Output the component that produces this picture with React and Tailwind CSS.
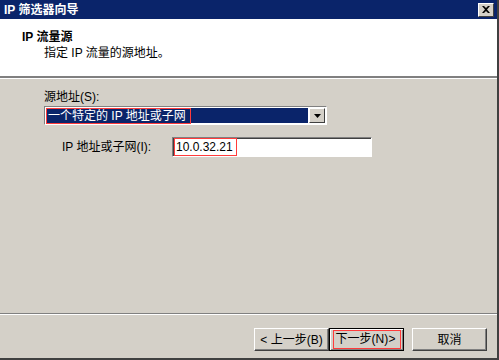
import React from 'react'

const font = { fontFamily: '"Liberation Sans", "Noto Sans CJK SC", sans-serif' }

const Button = ({ children, focused }) => (
  <button
    className={`h-[23px] w-[75px] bg-[#d4d0c8] text-[12px] text-black flex items-center justify-center whitespace-nowrap border ${
      focused
        ? 'border-black shadow-[inset_1px_1px_0_#fff,inset_-1px_-1px_0_#808080]'
        : 'border-t-white border-l-white border-r-[#404040] border-b-[#404040] shadow-[inset_-1px_-1px_0_#808080]'
    }`}
  >
    {focused ? (
      <span className="border border-[#ff3b3b] pl-[2px] pr-[4px] leading-[17px] w-[68px] flex justify-between">
        <span>下一步(N)</span>
        <span>&gt;</span>
      </span>
    ) : (
      <span>{children}</span>
    )}
  </button>
)

export default function App() {
  return (
    <div style={font} className="w-[499px] h-[360px] bg-[#d4d0c8] flex flex-col border-r-2 border-b-2 border-[#404040] overflow-hidden">
      {/* Title bar */}
      <div className="h-[19px] bg-[#0a246a] flex items-center justify-between pl-[4px] pr-[3px] shrink-0">
        <span className="text-white font-bold text-[12px] leading-none">IP 筛选器向导</span>
        <div className="w-[16px] h-[14px] bg-[#d4d0c8] border border-t-white border-l-white border-r-[#404040] border-b-[#404040] flex items-center justify-center">
          <svg width="8" height="7" viewBox="0 0 8 7">
            <path d="M0 0h2l2 2 2-2h2L5 3.5 8 7H6L4 5 2 7H0l3-3.5z" fill="#000" />
          </svg>
        </div>
      </div>

      {/* Header */}
      <div className="h-[59px] bg-white border-b-2 border-b-[#808080] shrink-0 pl-[22px] pt-[10px] shadow-[0_1px_0_#fff]">
        <div className="text-[12px] font-bold leading-[16px] text-black">IP 流量源</div>
        <div className="text-[12px] leading-[16px] text-black pl-[22px]">指定 IP 流量的源地址。</div>
      </div>

      {/* Body */}
      <div className="flex-1 pl-[44px] pt-[11px] flex flex-col">
        <div className="text-[12px] leading-[16px] text-black">源地址(S):</div>
        <div className="mt-[1px] w-[283px] h-[19px] bg-white border border-t-[#808080] border-l-[#808080] border-r-white border-b-white flex">
          <div className="flex-1 bg-[#0a246a] m-[1px] flex items-center">
            <span className="text-white text-[12px] leading-[14px] border border-[#ff3b3b] pl-[1px] pr-[2px] w-[145px] whitespace-nowrap">一个特定的 IP 地址或子网</span>
          </div>
          <div className="w-[16px] h-[15px] mt-[1px] mr-[1px] bg-[#d4d0c8] border border-t-white border-l-white border-r-[#404040] border-b-[#404040] flex items-center justify-center">
            <svg width="7" height="4" viewBox="0 0 7 4">
              <path d="M0 0h7L3.5 4z" fill="#000" />
            </svg>
          </div>
        </div>

        <div className="flex items-center mt-[12px] ml-[18px]">
          <span className="text-[12px] text-black w-[110px] whitespace-nowrap">IP 地址或子网(I):</span>
          <div className="w-[200px] h-[20px] bg-white border border-t-[#808080] border-l-[#808080] border-r-white border-b-white shadow-[inset_1px_1px_0_#404040] flex items-center pl-[1px]">
            <span className="text-[12px] text-black leading-[16px] border border-[#ff3b3b] px-[1px] w-[63px]">10.0.32.21</span>
          </div>
        </div>
      </div>

      {/* Separator */}
      <div className="h-[2px] border-t border-t-[#808080] border-b border-b-white shrink-0" />

      {/* Footer */}
      <div className="h-[43px] shrink-0 flex items-start justify-end pt-[13px] pr-[10px]">
        <Button>&lt; 上一步(B)</Button>
        <Button focused />
        <div className="w-[8px]" />
        <Button>取消</Button>
      </div>
    </div>
  )
}
